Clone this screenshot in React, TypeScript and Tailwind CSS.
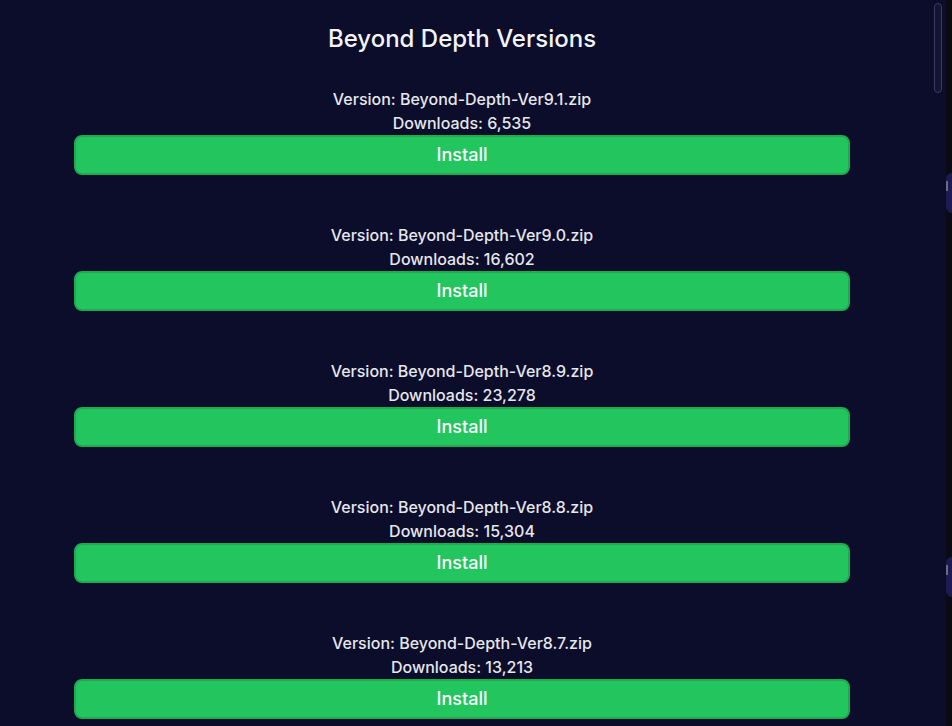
import React from "react";

const versions = [
	{ file: "Beyond-Depth-Ver9.1.zip", downloads: "6,535" },
	{ file: "Beyond-Depth-Ver9.0.zip", downloads: "16,602" },
	{ file: "Beyond-Depth-Ver8.9.zip", downloads: "23,278" },
	{ file: "Beyond-Depth-Ver8.8.zip", downloads: "15,304" },
	{ file: "Beyond-Depth-Ver8.7.zip", downloads: "13,213" },
];

const SideTab: React.FC<{ className?: string }> = ({ className }) => {
	return (
		<div className={`h-[40px] w-[6px] rounded-l-lg bg-[#1d1a52] pt-[8px] ${className ?? ""}`}>
			<div className="h-[10px] w-[2px] bg-[#6b6b80]" />
		</div>
	);
};

const App: React.FC = () => {
	return (
		<div
			className="flex h-[726px] w-[952px] overflow-hidden bg-[#0a0a12]"
			style={{ fontFamily: "Inter, 'Noto Sans', sans-serif" }}
		>
			<div className="flex w-[946px] bg-[#0c0c2b]">
				<main className="flex w-[924px] flex-col items-center pt-[23px]">
					<h1 className="mb-[32px] text-2xl font-medium text-[#f3f4f6]">Beyond Depth Versions</h1>

					<div className="flex w-[776px] flex-col gap-12">
						{versions.map((item, index) => {
							return (
								<div key={index} className="flex flex-col items-center">
									<p className="text-base font-medium text-[#e5e7eb]">Version: {item.file}</p>
									<p className="text-base font-medium text-[#e5e7eb]">Downloads: {item.downloads}</p>
									<button className="w-full rounded-lg border-2 border-[#1faa50] bg-[#22c55e] py-[4px] text-lg font-medium text-white">
										Install
									</button>
								</div>
							);
						})}
					</div>
				</main>

				{/* scrollbar */}
				<div className="w-[22px] pl-[10px] pt-[3px]">
					<div className="h-[90px] w-[8px] rounded-full border border-[#3a3a5e] bg-[#131336]" />
				</div>
			</div>

			<div className="flex w-[6px] flex-col pt-[173px]">
				<SideTab />
				<SideTab className="mt-[344px]" />
			</div>
		</div>
	);
};

export default App;
